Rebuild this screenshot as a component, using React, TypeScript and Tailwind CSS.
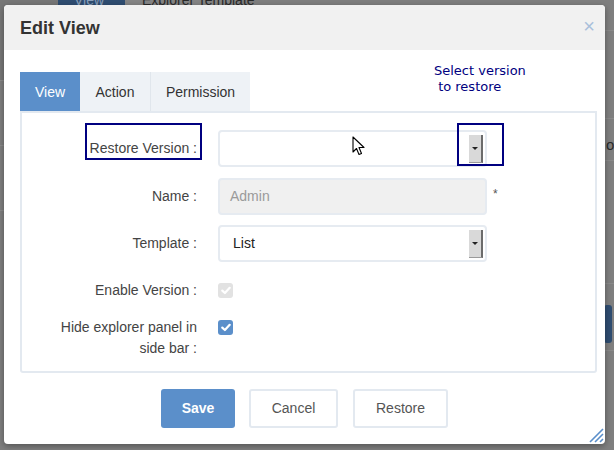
import React from "react";

const font = { fontFamily: '"Liberation Sans", Arial, Helvetica, sans-serif' };

function DropBtn() {
  return (
    <div className="absolute right-[2px] top-[3px] bottom-[2px] w-[14px] bg-[#d9d9d9] border-r-2 border-b border-r-[#6b6b6b] border-b-[#9a9a9a] flex items-center justify-center">
      <svg width="6" height="4" viewBox="0 0 6 4">
        <path d="M0 0 L6 0 L3 3 Z" fill="#222" />
      </svg>
    </div>
  );
}

function Check({ disabled }: { disabled?: boolean }) {
  return (
    <div
      className={
        "w-[15px] h-[15px] rounded-[3px] flex items-center justify-center " +
        (disabled ? "bg-[#e2e2e2]" : "bg-[#5b8fca]")
      }
    >
      <svg width="10" height="9" viewBox="0 0 10 9">
        <path d="M1.3 4.6 L3.9 7 L8.7 1.8" stroke="#fff" strokeWidth="2.2" fill="none" strokeLinecap="round" strokeLinejoin="round" />
      </svg>
    </div>
  );
}

export default function App() {
  return (
    <div className="relative w-[614px] h-[450px] overflow-hidden bg-[#7f7f7f]" style={font}>
      {/* background page behind the modal overlay */}
      <div className="absolute left-0 top-0 w-[58px] h-[80px] bg-[#777777]" />
      <div className="absolute left-0 top-[80px] w-[20px] h-px bg-[#8c8c8c]" />
      <div className="absolute left-0 top-[145px] w-[20px] h-px bg-[#8c8c8c]" />
      <div className="absolute left-0 top-[210px] w-[20px] h-px bg-[#8c8c8c]" />
      <div className="absolute left-[58px] top-0 w-[67px] h-[10px] bg-[#2f4d71]" />
      <div className="absolute left-[125px] top-0 w-[113px] h-[10px] bg-[#858585]" />
      <div className="absolute left-[142px] top-[-10px] text-[14px] text-[#2a2a2a]">Explorer Template</div>
      <div className="absolute left-[74px] top-[-10px] text-[14px] text-[#8aa0bb]">View</div>
      <div className="absolute right-0 top-[30px] w-[20px] h-px bg-[#8a8a8a]" />
      <div className="absolute right-0 top-[118px] w-[20px] h-px bg-[#8a8a8a]" />
      <div className="absolute right-0 top-[160px] w-[20px] h-px bg-[#8a8a8a]" />
      <div className="absolute right-0 top-[283px] w-[20px] h-px bg-[#8a8a8a]" />
      <div className="absolute right-0 top-[350px] w-[20px] h-px bg-[#8a8a8a]" />
      <div className="absolute left-[606px] top-[134px] text-[15px] text-[#2a2a2a]">o</div>
      <div className="absolute left-[604px] top-[305px] w-[8px] h-[38px] rounded-[3px] bg-[#2f4d71]" />

      {/* modal */}
      <div className="absolute left-[4px] top-[5px] w-[601px] h-[439px] bg-white rounded-[4px] shadow-[0_2px_6px_rgba(0,0,0,0.35)] overflow-hidden flex flex-col">
        <div className="h-[45px] bg-[#f1f1f1] flex items-center justify-between pl-[16px] pr-[10px] shrink-0">
          <div className="text-[18px] font-bold text-[#333] mt-[1px]">Edit View</div>
          <div className="text-[20px] leading-none text-[#a9bfdb] mb-[3px]">×</div>
        </div>

        <div className="pl-[16px] pr-[8px] pt-[22px] flex flex-col">
          <div className="flex h-[39px] text-[14px]">
            <div className="w-[60px] bg-[#5b8fca] text-white flex items-center justify-center pt-px">View</div>
            <div className="w-[70px] bg-[#eef2f6] text-[#333] flex items-center justify-center pt-px">Action</div>
            <div className="w-px bg-[#e0e6ec]" />
            <div className="w-[99px] bg-[#eef2f6] text-[#333] flex items-center justify-center pt-px">Permission</div>
          </div>

          <div className="h-[262px] border-2 border-[#e3e9f0] rounded-b-[3px] pt-[17px] flex flex-col text-[14px] text-[#444]">
            {/* Restore version */}
            <div className="flex items-center h-[37px]">
              <div className="w-[175px] text-right -mt-px">Restore Version :</div>
              <div className="relative ml-[21px] w-[269px] h-[37px] border-2 border-[#e6ebf1] rounded-[4px] bg-white">
                <DropBtn />
              </div>
            </div>
            {/* Name */}
            <div className="flex items-center h-[37px] mt-[11px]">
              <div className="w-[175px] text-right">Name :</div>
              <div className="ml-[21px] w-[269px] h-[37px] border-2 border-[#e6ebf1] rounded-[4px] bg-[#f0f0f0] flex items-center pl-[10px] text-[#9a9a9a]">
                Admin
              </div>
              <div className="ml-[6px] text-[12px] text-[#555] -mt-[6px]">*</div>
            </div>
            {/* Template */}
            <div className="flex items-center h-[37px] mt-[10px]">
              <div className="w-[175px] text-right">Template :</div>
              <div className="relative ml-[21px] w-[269px] h-[37px] border-2 border-[#e6ebf1] rounded-[4px] bg-white flex items-center pl-[13px] text-[#222]">
                List
                <DropBtn />
              </div>
            </div>
            {/* Enable version */}
            <div className="flex items-center mt-[20px] h-[17px]">
              <div className="w-[175px] text-right">Enable Version :</div>
              <div className="ml-[21px]">
                <Check disabled />
              </div>
            </div>
            {/* Hide explorer */}
            <div className="flex items-start mt-[18px]">
              <div className="w-[175px] text-right leading-[21px]">
                Hide explorer panel in
                <br />
                side bar :
              </div>
              <div className="ml-[21px] mt-[3px]">
                <Check />
              </div>
            </div>
          </div>
        </div>

        <div className="flex justify-center gap-[14px] mt-[16px] text-[14px]">
          <div className="w-[74px] h-[39px] rounded-[3px] bg-[#5b8fca] text-white font-bold flex items-center justify-center">Save</div>
          <div className="w-[89px] h-[39px] rounded-[3px] border-2 border-[#e3e9f0] text-[#555] flex items-center justify-center">Cancel</div>
          <div className="w-[95px] h-[39px] rounded-[3px] border-2 border-[#e3e9f0] text-[#555] flex items-center justify-center ml-px">Restore</div>
        </div>

        {/* resize grip */}
        <svg className="absolute right-[1px] bottom-[1px]" width="16" height="16" viewBox="0 0 16 16">
          <path d="M15 2 L2 15 M15 7 L7 15 M15 12 L12 15" stroke="#5b8fca" strokeWidth="1.6" />
        </svg>
      </div>

      {/* annotation overlays */}
      <div className="absolute left-[85px] top-[123px] w-[117px] h-[37px] border-2 border-[#000080]" />
      <div className="absolute left-[457px] top-[123px] w-[47px] h-[43px] border-2 border-[#000080]" />
      <div
        className="absolute left-[434px] top-[63px] text-[13px] leading-[16px] text-[#000080] whitespace-pre"
        style={{ fontFamily: '"DejaVu Sans", Verdana, sans-serif' }}
      >
        {"Select version\n to restore"}
      </div>

      {/* mouse cursor */}
      <svg className="absolute left-[352px] top-[136px]" width="13" height="20" viewBox="0 0 13 20">
        <path d="M1 1 L1 16 L4.5 12.5 L7 18.5 L9.5 17.5 L7 11.5 L12 11.5 Z" fill="#fff" stroke="#000" strokeWidth="1.1" strokeLinejoin="round" />
      </svg>
    </div>
  );
}
